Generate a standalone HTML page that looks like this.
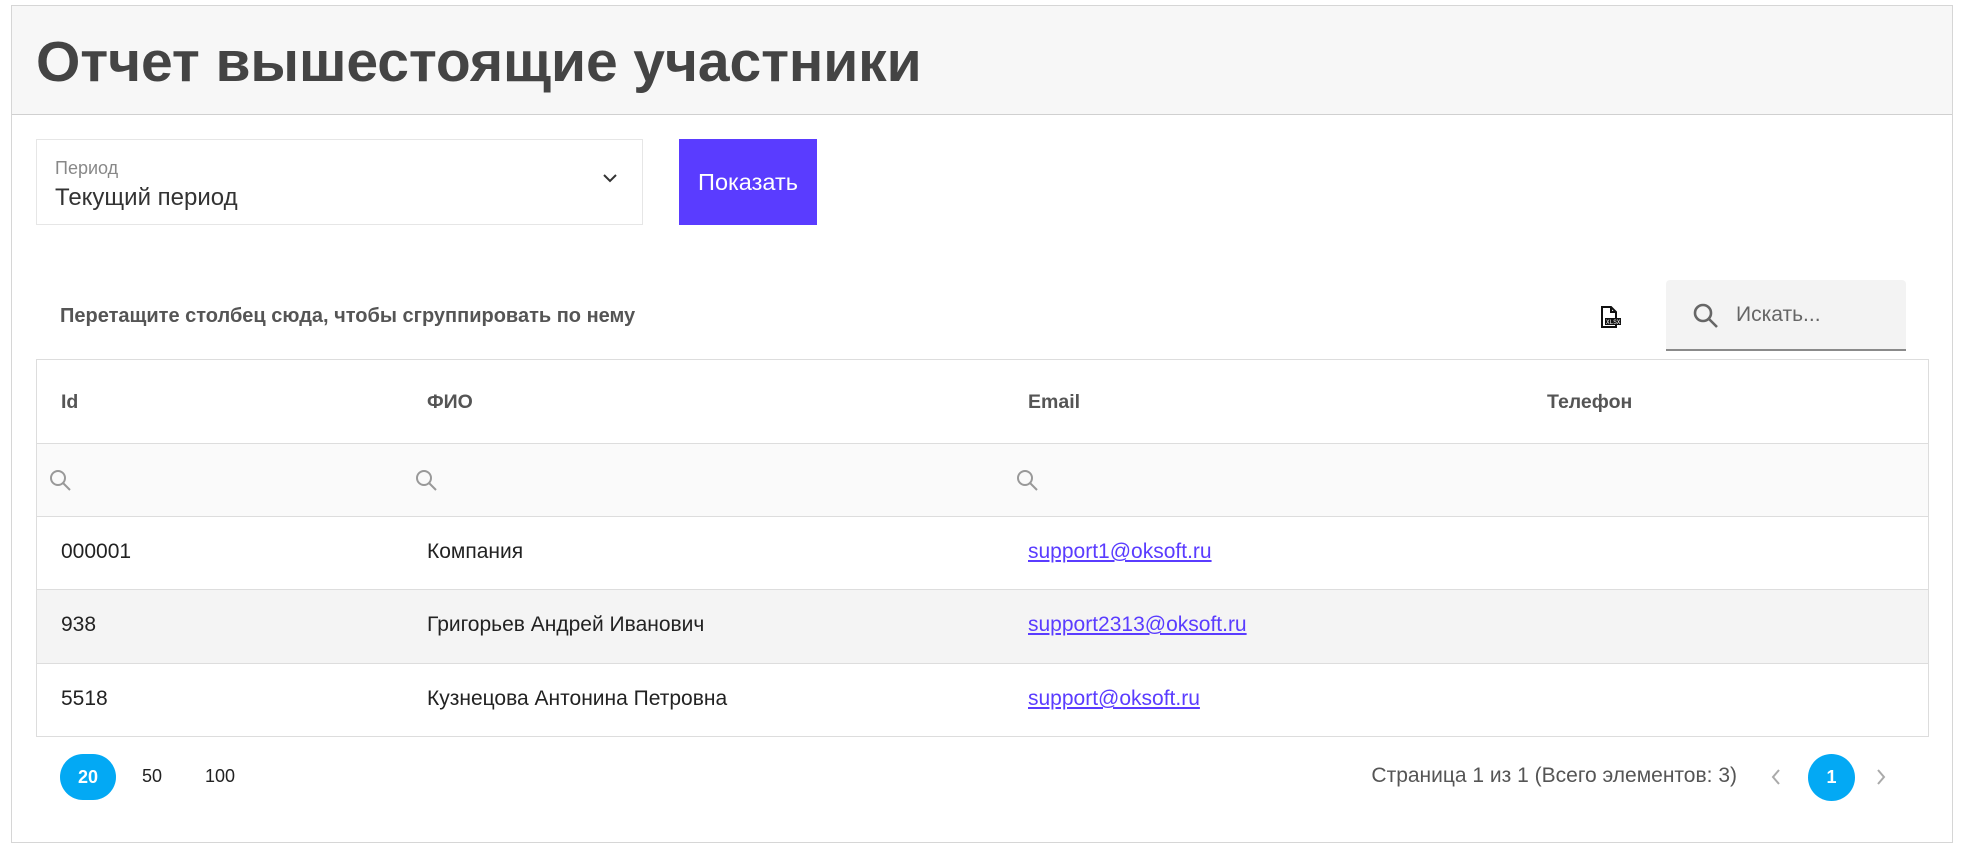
<!DOCTYPE html>
<html><head><meta charset="utf-8"><style>
*{box-sizing:border-box;margin:0;padding:0}
body{width:1964px;height:860px;background:#fff;font-family:"Liberation Sans",sans-serif;position:relative;overflow:hidden;color:#333}
.frame{position:absolute;left:11px;top:5px;width:1942px;height:838px;border:1px solid #d6d6d6}
.hdr{position:absolute;left:0;top:0;right:0;height:109px;background:#f7f7f7;border-bottom:1px solid #d0d0d0}
.title{position:absolute;left:24px;top:23px;font-size:57px;font-weight:bold;color:#444;letter-spacing:-0.1px}
.abs{position:absolute}
.sel{left:36px;top:139px;width:607px;height:86px;border:1px solid #e6e6e6}
.btn{left:679px;top:139px;width:138px;height:86px;background:#5a3cff;color:#fff;font-size:23.5px;display:flex;align-items:center;justify-content:center}
.grid{left:36px;top:359px;width:1893px;height:378px;border:1px solid #ddd}
.row{position:absolute;left:0;right:0;border-bottom:1px solid #ddd}
.c{position:absolute;font-size:21px;color:#222}
.h{color:#555;font-weight:bold;font-size:19.5px}
a{color:#5a3cff;text-decoration:underline}
</style></head><body>
<div class="frame"></div>
<div class="hdr abs" style="left:12px;top:6px;width:1940px;height:109px"><div class="title">Отчет вышестоящие участники</div></div>
<div class="abs sel">
 <div class="abs" style="left:18px;top:18px;font-size:18px;color:#888">Период</div>
 <div class="abs" style="left:18px;top:44px;font-size:24px;color:#333">Текущий период</div>
 <svg class="abs" style="left:564px;top:32px" width="18" height="12" viewBox="0 0 18 12"><path d="M3 3l6 6 6-6" stroke="#333" stroke-width="2" fill="none"/></svg>
</div>
<div class="abs btn">Показать</div>
<div class="abs" style="left:60px;top:305px;font-size:20px;color:#555;font-weight:bold">Перетащите столбец сюда, чтобы сгруппировать по нему</div>
<svg class="abs" style="left:1598px;top:305px" width="24" height="24" viewBox="0 0 24 24"><path d="M4 2h9l5 5v15H4z" fill="#fff" stroke="#111" stroke-width="2"/><path d="M13 2v5h5" fill="none" stroke="#111" stroke-width="2"/><rect x="7" y="13" width="16" height="7" fill="#111"/><text x="8" y="19" font-size="6" fill="#fff" font-family="Liberation Mono">XLSX</text></svg>
<div class="abs" style="left:1666px;top:280px;width:240px;height:71px;background:#f3f3f3;border-bottom:2px solid #8a8a8a;border-radius:4px 4px 0 0">
 <svg class="abs" style="left:26px;top:22px" width="28" height="28" viewBox="0 0 28 28"><circle cx="11" cy="11" r="8" stroke="#666" stroke-width="2.6" fill="none"/><path d="M17 17l8 8" stroke="#666" stroke-width="2.6"/></svg>
 <div class="abs" style="left:70px;top:23px;font-size:21px;color:#666">Искать...</div>
</div>
<div class="abs grid">
 <div class="row" style="top:0;height:84px">
  <div class="c h" style="left:24px;top:31px">Id</div><div class="c h" style="left:390px;top:31px">ФИО</div><div class="c h" style="left:991px;top:31px">Email</div><div class="c h" style="left:1510px;top:31px">Телефон</div>
 </div>
 <div class="row" style="top:84px;height:73px;background:#fafafa">
  <svg class="abs" style="left:11px;top:24px" width="26" height="26" viewBox="0 0 26 26"><circle cx="10" cy="10" r="7" stroke="#999" stroke-width="2" fill="none"/><path d="M15 15l7 7" stroke="#999" stroke-width="2"/></svg>
  <svg class="abs" style="left:377px;top:24px" width="26" height="26" viewBox="0 0 26 26"><circle cx="10" cy="10" r="7" stroke="#999" stroke-width="2" fill="none"/><path d="M15 15l7 7" stroke="#999" stroke-width="2"/></svg>
  <svg class="abs" style="left:978px;top:24px" width="26" height="26" viewBox="0 0 26 26"><circle cx="10" cy="10" r="7" stroke="#999" stroke-width="2" fill="none"/><path d="M15 15l7 7" stroke="#999" stroke-width="2"/></svg>
 </div>
 <div class="row" style="top:157px;height:73px"><div class="c" style="left:24px;top:23px">000001</div><div class="c" style="left:390px;top:23px">Компания</div><div class="c" style="left:991px;top:23px"><a>support1@oksoft.ru</a></div></div>
 <div class="row" style="top:230px;height:74px;background:#f4f4f4"><div class="c" style="left:24px;top:23px">938</div><div class="c" style="left:390px;top:23px">Григорьев Андрей Иванович</div><div class="c" style="left:991px;top:23px"><a>support2313@oksoft.ru</a></div></div>
 <div class="row" style="top:304px;height:73px;border-bottom:none"><div class="c" style="left:24px;top:23px">5518</div><div class="c" style="left:390px;top:23px">Кузнецова Антонина Петровна</div><div class="c" style="left:991px;top:23px"><a>support@oksoft.ru</a></div></div>
</div>
<div class="abs" style="left:60px;top:754px;width:56px;height:46px;border-radius:23px;background:#03a9f4;color:#fff;font-size:18px;font-weight:bold;display:flex;align-items:center;justify-content:center">20</div>
<div class="abs" style="left:142px;top:766px;font-size:18px;color:#222">50</div>
<div class="abs" style="left:205px;top:766px;font-size:18px;color:#222">100</div>
<div class="abs" style="left:1250px;top:764px;width:487px;text-align:right;font-size:21px;color:#555">Страница 1 из 1 (Всего элементов: 3)</div>
<svg class="abs" style="left:1769px;top:767px" width="14" height="20" viewBox="0 0 14 20"><path d="M10 3l-6 7 6 7" stroke="#aaa" stroke-width="2" fill="none"/></svg>
<div class="abs" style="left:1808px;top:754px;width:47px;height:47px;border-radius:50%;background:#03a9f4;color:#fff;font-size:18px;font-weight:bold;display:flex;align-items:center;justify-content:center">1</div>
<svg class="abs" style="left:1874px;top:767px" width="14" height="20" viewBox="0 0 14 20"><path d="M4 3l6 7-6 7" stroke="#aaa" stroke-width="2" fill="none"/></svg>
</body></html>
